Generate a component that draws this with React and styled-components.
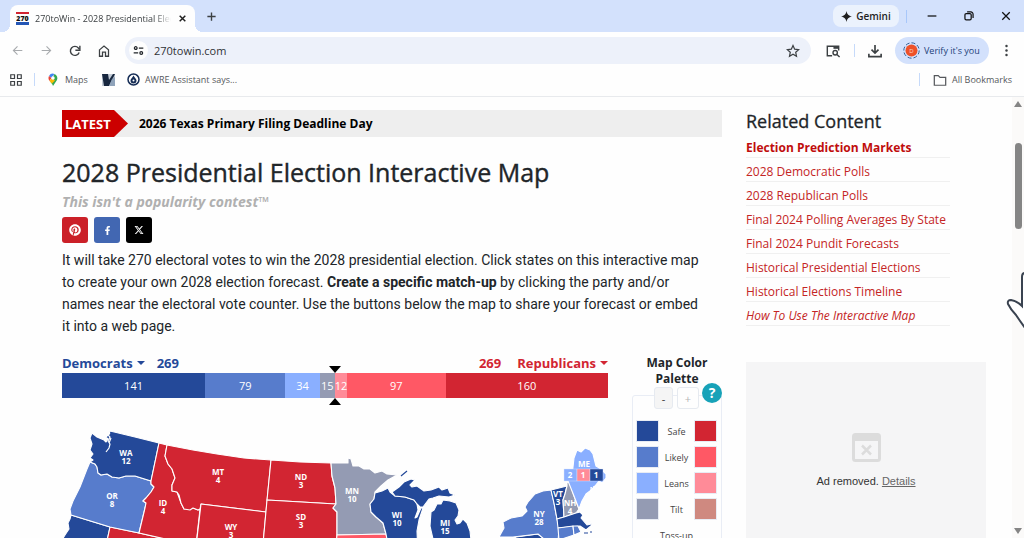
import React, { useState } from 'react';
import styled, { createGlobalStyle } from 'styled-components';
import { FaFacebookF, FaPinterest } from 'react-icons/fa';
import { FaXTwitter } from 'react-icons/fa6';

const colors = {
  demSafe: '#244999',
  demLikely: '#577ccc',
  demLeans: '#8aafff',
  demTilt: '#949bb3',
  repSafe: '#d22532',
  repLikely: '#ff5865',
  repLeans: '#ff8b98',
  repTilt: '#cf8980',
};

const GlobalStyle = createGlobalStyle`
  * {
    box-sizing: border-box;
  }

  body {
    margin: 0;
    font-family: 'Open Sans', 'Noto Sans', sans-serif;
    color: #212529;
    background: #fefefe;
  }

  button, input {
    font-family: inherit;
  }
`;

const Browser = styled.div`
  display: flex;
  flex-direction: column;
  height: 100vh;
  overflow: hidden;
`;

const TabStrip = styled.header`
  display: flex;
  align-items: flex-end;
  height: 32px;
  flex: none;
  padding-left: 10px;
  background: #d3e1fc;
`;

const Tab = styled.div`
  position: relative;
  display: flex;
  align-items: center;
  width: 185px;
  height: 27px;
  padding: 0 6px;
  background: #fefefe;
  border-radius: 8px 8px 0 0;

  &::before, &::after {
    content: '';
    position: absolute;
    bottom: 0;
    width: 8px;
    height: 8px;
  }

  &::before {
    left: -8px;
    background: radial-gradient(circle at 0 0, transparent 8px, #fefefe 8px);
  }

  &::after {
    right: -8px;
    background: radial-gradient(circle at 100% 0, transparent 8px, #fefefe 8px);
  }
`;

const TabTitle = styled.span`
  flex: 1;
  margin-left: 6px;
  margin-right: 4px;
  font-size: 9px;
  line-height: 14px;
  white-space: nowrap;
  overflow: hidden;
  color: #3c4043;
  mask-image: linear-gradient(to right, #000 88%, transparent);
`;

const IconButton = styled.button`
  display: flex;
  align-items: center;
  justify-content: center;
  flex: none;
  width: ${(props) => props.$width || 24}px;
  height: 24px;
  padding: 0;
  border: none;
  background: none;
  color: ${(props) => props.$color || '#3c4043'};
`;

const NewTab = styled.div`
  flex: 1;
  display: flex;
  align-self: center;
  padding-left: 4px;
`;

const WindowControls = styled.div`
  display: flex;
  align-items: center;
  align-self: stretch;
`;

const GeminiButton = styled.button`
  display: flex;
  align-items: center;
  justify-content: center;
  gap: 4px;
  width: 66px;
  height: 22px;
  padding: 0;
  border: none;
  border-radius: 8px;
  background: #ebf2fd;
  color: #1f1f1f;
  font-size: 10px;
  font-weight: 600;
`;

const Separator = styled.span`
  flex: none;
  width: 1px;
  height: 13px;
  margin: 0 ${(props) => props.$gap || 0}px;
  background: ${(props) => props.$color || '#c6dafa'};
`;

const Toolbar = styled.nav`
  display: flex;
  align-items: center;
  flex: none;
  height: 37px;
  padding-left: 3px;
`;

const NavButtons = styled.div`
  display: flex;
  gap: 1px;
  margin-right: 7px;
`;

const AddressBar = styled.label`
  display: flex;
  align-items: center;
  flex: 1;
  height: 27px;
  padding: 0 6px 0 4px;
  border-radius: 14px;
  background: #edf1fa;
`;

const SiteInfo = styled.span`
  display: flex;
  align-items: center;
  justify-content: center;
  width: 19px;
  height: 19px;
  border-radius: 50%;
  background: #fefefe;
`;

const AddressInput = styled.input`
  flex: 1;
  min-width: 0;
  margin-left: 6px;
  padding: 0;
  border: none;
  outline: none;
  background: none;
  font-size: 11px;
  color: #303236;
`;

const ProfileButton = styled.button`
  display: flex;
  align-items: center;
  flex: none;
  gap: 4px;
  width: 94px;
  height: 27px;
  padding: 0 0 0 8px;
  border: none;
  border-radius: 14px;
  background: #d3e1fc;
  color: #1c4079;
  font-size: 9px;
  white-space: nowrap;
`;

const Bookmarks = styled.nav`
  display: flex;
  align-items: center;
  flex: none;
  height: 28px;
  padding: 0 12px 6px 9px;
  border-bottom: 1px solid #e8eaed;
`;

const Bookmark = styled.a`
  display: flex;
  align-items: center;
  gap: 5px;
  margin-right: ${(props) => props.$gap || 0}px;
  color: #55585c;
  font-size: 9px;
  text-decoration: none;
  white-space: nowrap;
`;

const Spacer = styled.span`
  flex: 1;
`;

const Viewport = styled.div`
  position: relative;
  display: flex;
  flex: 1;
  min-height: 0;
  overflow: hidden;
`;

const Page = styled.div`
  flex: 1;
  display: grid;
  grid-template-columns: minmax(0, 1fr) 240px;
  align-items: start;
  gap: 24px;
  padding: 13px 26px 0 62px;
`;

const Ticker = styled.div`
  display: flex;
  align-items: center;
  height: 27px;
  background: #eeeeee;
`;

const TickerLabel = styled.span`
  display: flex;
  align-items: center;
  width: 66px;
  height: 27px;
  padding-left: 3px;
  background: #cc0000;
  color: #fff;
  font-size: 13px;
  font-weight: 700;
  clip-path: polygon(0 0, 52px 0, 100% 50%, 52px 100%, 0 100%);
`;

const TickerLink = styled.a`
  margin-left: 11px;
  color: #000;
  font-size: 12px;
  font-weight: 700;
  text-decoration: none;
`;

const Title = styled.h1`
  margin: 19px 0 0;
  font-size: 25px;
  line-height: 32px;
  font-weight: 500;
  -webkit-text-stroke: 0.4px currentColor;
  white-space: nowrap;
`;

const Tagline = styled.p`
  margin: 4px 0 5px;
  color: #b0b0b0;
  font-size: 14px;
  line-height: 20px;
  font-weight: 700;
  font-style: italic;
`;

const ShareRow = styled.div`
  display: flex;
  gap: 6px;
`;

const ShareButton = styled.button`
  display: flex;
  align-items: center;
  justify-content: center;
  width: 26px;
  height: 26px;
  padding: 0;
  border: none;
  border-radius: 3px;
  background: ${(props) => props.$background};
  color: #fff;
  font-size: 12px;
`;

const Intro = styled.p`
  margin: 6px 0 18px;
  font-family: Roboto, 'Open Sans', sans-serif;
  font-size: 14px;
  line-height: 22px;
  white-space: nowrap;
`;

const Forecast = styled.section`
  display: grid;
  grid-template-columns: minmax(0, 1fr) 90px;
  gap: 24px;
`;

const CounterHeader = styled.div`
  display: flex;
  align-items: center;
  justify-content: space-between;
  height: 18px;
  padding-bottom: 2px;
`;

const PartyTotal = styled.div`
  display: flex;
  align-items: center;
  flex-direction: ${(props) => (props.$reverse ? 'row-reverse' : 'row')};
  gap: ${(props) => (props.$reverse ? 16 : 12)}px;
  color: ${(props) => props.$color};
  font-size: 13px;
  font-weight: 700;
`;

const PartyButton = styled.button`
  display: flex;
  align-items: center;
  gap: 4px;
  padding: 0;
  border: none;
  background: none;
  color: inherit;
  font-size: 13px;
  font-weight: 700;

  &::after {
    content: '';
    border: 4px solid transparent;
    border-top-color: currentColor;
    border-bottom: 0;
  }
`;

const CounterBar = styled.div`
  position: relative;
  display: flex;
  height: 25px;

  &::before, &::after {
    content: '';
    position: absolute;
    left: calc(50% - 6px);
    border: 6px solid transparent;
  }

  &::before {
    bottom: 100%;
    border-top: 7px solid #000;
    border-bottom: 0;
  }

  &::after {
    top: 100%;
    border-bottom: 7px solid #000;
    border-top: 0;
  }
`;

const Segment = styled.div`
  display: flex;
  align-items: center;
  justify-content: center;
  flex: ${(props) => props.$votes} 0 0;
  min-width: 0;
  background: ${(props) => props.$color};
  color: #fff;
  font-size: 11px;
`;

const MapSvg = styled.svg`
  display: block;
  width: 100%;
  margin-top: 9px;
  overflow: visible;
`;

const StatePath = styled.path`
  stroke: #fff;
  stroke-width: 1.1;
  stroke-linejoin: round;
  cursor: pointer;
`;

const StateLabel = styled.text`
  fill: #fff;
  font-size: 8px;
  font-weight: 700;
  text-anchor: middle;
`;

const Palette = styled.aside`
  position: relative;
`;

const PaletteTitle = styled.h2`
  margin: 0;
  font-size: 12px;
  line-height: 16px;
  font-weight: 700;
  text-align: center;
`;

const PaletteBox = styled.div`
  margin-top: 8px;
  padding: 0 4px 12px 3px;
  border: 1px solid #e9edf5;
  border-radius: 3px;
`;

const PaletteButtons = styled.div`
  display: flex;
  justify-content: center;
  gap: 4px;
  margin-top: -9px;
  margin-bottom: 11px;
`;

const StepButton = styled.button`
  width: ${(props) => props.$width}px;
  height: 22px;
  padding: 0;
  border: 1px solid #e6eaf0;
  border-radius: 3px;
  background: ${(props) => props.$background};
  color: ${(props) => props.$color};
  font-size: 11px;
`;

const HelpButton = styled.button`
  position: absolute;
  top: 28px;
  right: 0;
  width: 20px;
  height: 20px;
  padding: 0;
  border: none;
  border-radius: 50%;
  background: #17a2b8;
  color: #fff;
  font-size: 14px;
  line-height: 20px;
  font-weight: 700;
`;

const PaletteRow = styled.div`
  display: grid;
  grid-template-columns: 23px 1fr 23px;
  align-items: center;
  height: 22px;
  margin-bottom: 4px;
  color: #444;
  font-size: 9px;
  text-align: center;
`;

const Swatch = styled.button`
  height: 22px;
  padding: 0;
  border: 1px solid #e8ecf4;
  background: ${(props) => props.$color};
`;

const TossUp = styled.div`
  padding-top: 5px;
  color: #444;
  font-size: 9px;
  line-height: 14px;
  text-align: center;
`;

const SidebarTitle = styled.h2`
  margin: 0 0 2px;
  font-size: 18px;
  line-height: 22px;
  font-weight: 500;
  -webkit-text-stroke: 0.3px currentColor;
`;

const LinkList = styled.ul`
  display: grid;
  grid-template-rows: repeat(8, 1fr);
  width: 204px;
  height: 189px;
  margin: 0;
  padding: 0;
  list-style: none;
`;

const LinkItem = styled.li`
  padding-top: 5px;
  border-bottom: 1px solid #f0f0f0;
  font-size: 12px;
  line-height: 18px;
  white-space: nowrap;
`;

const RelatedLink = styled.a`
  color: ${(props) => (props.$bold ? '#c00d0d' : '#c42525')};
  font-weight: ${(props) => (props.$bold ? 700 : 400)};
  font-style: ${(props) => (props.$italic ? 'italic' : 'normal')};
  text-decoration: none;
`;

const AdBox = styled.div`
  display: flex;
  flex-direction: column;
  align-items: center;
  height: 250px;
  margin-top: 39px;
  padding-top: 71px;
  background: #f5f5f6;
  font-family: 'Liberation Sans', Arial, sans-serif;
  font-size: 11px;
`;

const AdText = styled.p`
  margin: 11px 0 0;
  line-height: 16px;
  color: #333;
`;

const AdLink = styled.a`
  color: #666;
`;

const Scrollbar = styled.div`
  display: flex;
  flex-direction: column;
  align-items: center;
  flex: none;
  width: 12px;
  padding: 4px 0;
  background: #fbfaf9;
`;

const ScrollArrow = styled.span`
  border: 4px solid transparent;
  ${(props) => (props.$up
    ? 'border-bottom: 6px solid #858585; border-top: 0;'
    : 'border-top: 6px solid #858585; border-bottom: 0;')}
`;

const ScrollTrack = styled.div`
  display: flex;
  flex: 1;
  padding-top: 36px;
`;

const ScrollThumb = styled.div`
  width: 7px;
  height: 86px;
  border-radius: 4px;
  background: #858585;
`;

const Cursor = styled.svg`
  position: absolute;
  top: 173px;
  right: 0;
  pointer-events: none;
`;

const segments = [
  { votes: 141, color: colors.demSafe },
  { votes: 79, color: colors.demLikely },
  { votes: 34, color: colors.demLeans },
  { votes: 15, color: colors.demTilt },
  { votes: 12, color: colors.repLeans },
  { votes: 97, color: colors.repLikely },
  { votes: 160, color: colors.repSafe },
];

const ratings = [
  { name: 'Safe', dem: colors.demSafe, rep: colors.repSafe },
  { name: 'Likely', dem: colors.demLikely, rep: colors.repLikely },
  { name: 'Leans', dem: colors.demLeans, rep: colors.repLeans },
  { name: 'Tilt', dem: colors.demTilt, rep: colors.repTilt },
];

const relatedLinks = [
  { text: 'Election Prediction Markets', bold: true },
  { text: '2028 Democratic Polls' },
  { text: '2028 Republican Polls' },
  { text: 'Final 2024 Polling Averages By State' },
  { text: 'Final 2024 Pundit Forecasts' },
  { text: 'Historical Presidential Elections' },
  { text: 'Historical Elections Timeline' },
  { text: 'How To Use The Interactive Map', italic: true },
];

const states = [
  { id: 'CA', color: colors.demSafe, d: 'M71 516 L110 528 L104 556 L62 556 L62 541 L65 536 L69 530 L68 524 L70 520Z' },
  { id: 'NV', color: colors.repSafe, d: 'M110 528 L139 534 L170 541 L168 556 L104 556Z' },
  { id: 'OR', votes: 8, x: 112, y: 500, color: colors.demLikely, d: 'M90 463 L95 465 L97 468 L98 474 L101 476 L107 475 L112 478 L119 479 L126 477 L135 477 L151 482 L151 485 L154 488 L151 493 L146 499 L143 502 L146 504 L145 509 L139 534 L110 528 L71 516 L70 510 L73 502 L80 488 L87 470Z' },
  { id: 'WA', votes: 12, x: 126, y: 457, color: colors.demSafe, d: 'M92 434 L97 438 L104 441 L106 443 L108 440 L106 438 L109 435 L110 432 L135 438 L159 444 L151 482 L135 477 L126 477 L119 479 L112 478 L107 475 L101 476 L98 474 L97 468 L95 465 L90 463 L93 461 L90 459 L93 455 L90 451 L92 445 L90 439Z' },
  { id: 'ID', votes: 4, x: 163, y: 507, color: colors.repSafe, d: 'M159 444 L167 446 L165 457 L168 465 L172 470 L175 479 L172 486 L172 492 L177 493 L181 504 L184 510 L193 509 L198 511 L200 510 L195 556 L168 556 L170 541 L139 534 L145 509 L146 504 L143 502 L146 499 L151 493 L154 488 L151 485 L151 482Z' },
  { id: 'MT', votes: 4, x: 218, y: 476, color: colors.repSafe, d: 'M167 446 L193 451 L217 455 L244 459 L271 461 L266 513 L201 505 L200 510 L198 511 L193 509 L190 511 L184 510 L181 504 L179 496 L177 493 L172 492 L172 486 L175 479 L172 470 L168 465 L165 457Z' },
  { id: 'WY', votes: 3, x: 231, y: 531, color: colors.repSafe, d: 'M201 505 L266 513 L262 556 L195 556Z' },
  { id: 'ND', votes: 3, x: 301, y: 481, color: colors.repSafe, d: 'M271 461 L300 463 L331 464 L332 477 L335 489 L336 505 L267 501Z' },
  { id: 'SD', votes: 3, x: 301, y: 521, color: colors.repSafe, d: 'M267 501 L336 505 L333 509 L337 513 L337 536 L335 556 L262 556Z' },
  { id: 'MN', votes: 10, x: 352, y: 495, color: colors.demTilt, d: 'M331 464 L348 464 L348 459 L351 460 L353 467 L359 467 L364 470 L370 470 L375 474 L382 472 L387 475 L397 476 L388 481 L381 487 L375 493 L374 500 L370 505 L371 513 L376 518 L383 524 L386 535 L337 536 L337 513 L333 509 L336 505 L335 489 L332 477Z' },
  { id: 'IA', color: colors.repLikely, d: 'M337 536 L386 535 L390 556 L335 556Z' },
  { id: 'WI', votes: 10, x: 397, y: 519, color: colors.demSafe, d: 'M375 494 L382 492 L388 489 L390 493 L395 497 L405 498 L414 501 L417 505 L418 511 L415 519 L417 518 L421 509 L423 509 L419 521 L417 532 L418 556 L390 556 L386 535 L383 524 L376 518 L371 513 L370 505 L374 500Z' },
  { id: 'MIU', color: colors.demSafe, d: 'M392 493 L399 488 L404 483 L411 480 L415 481 L410 486 L412 488 L417 487 L424 492 L431 491 L439 488 L442 491 L448 489 L450 494 L455 496 L449 498 L439 497 L433 499 L429 500 L423 508 L420 508 L417 505 L414 501 L405 498 L395 497Z' },
  { id: 'MI', votes: 15, x: 445, y: 527, color: colors.demSafe, d: 'M443 501 L450 502 L456 504 L459 511 L458 517 L455 521 L457 525 L460 524 L463 520 L467 524 L470 532 L471 541 L465 556 L434 556 L433 540 L430 527 L431 513 L434 511 L437 505 L441 505Z' },
  { id: 'PA', color: colors.demSafe, d: 'M504 556 L516 538 L538 535 L543 539 L543 556Z' },
  { id: 'NY', votes: 28, x: 539, y: 518, color: colors.demLikely, d: 'M551 491 L543 492 L535 495 L528 503 L525 508 L527 512 L522 517 L511 519 L503 523 L504 529 L499 538 L513 538 L538 535 L544 540 L558 544 L559 528 L557 520 L554 504Z' },
  { id: 'VT', votes: 3, x: 558, y: 498, color: colors.demSafe, d: 'M551 491 L567 487 L565 495 L563 501 L564 518 L557 520 L554 504Z' },
  { id: 'NH', votes: 4, x: 570, y: 507, color: colors.demTilt, d: 'M567 487 L567 483 L570 484 L574 497 L579 510 L576 514 L564 518 L563 501 L565 495Z' },
  { id: 'ME', color: colors.demLeans, x: 584, y: 468, d: 'M568 482 L572 477 L573 468 L574 459 L577 451 L581 453 L585 449 L590 451 L593 455 L596 467 L601 470 L606 475 L606 479 L602 484 L599 482 L595 487 L590 492 L586 495 L582 502 L579 510 L574 497Z' },
  { id: 'MA', color: colors.demSafe, d: 'M557 520 L564 518 L576 514 L580 513 L583 516 L581 519 L587 526 L591 525 L589 521 L592 526 L586 531 L580 527 L558 529Z' },
  { id: 'CT', color: colors.demLikely, d: 'M558 529 L573 527 L574 536 L559 541Z' },
  { id: 'RI', color: colors.demLikely, d: 'M573 527 L578 527 L581 533 L574 536Z' },
];

const districts = [
  { votes: 2, x: 564, color: colors.demLeans },
  { votes: 1, x: 577, color: colors.repLeans },
  { votes: 1, x: 590, color: colors.demSafe },
];

const ElectionMap = () => (
  <MapSvg viewBox="62 408 546 152" role="img" aria-label="Electoral map of the United States">
    {states.map((state) => (
      <StatePath key={state.id} d={state.d} fill={state.color} />
    ))}
    {/* Puget Sound */}
    <path d="M110 434l-2 2 2 2-2 4 2 3-1 4-3 4m3-9 2-5" stroke="#fff" strokeWidth="1.2" fill="none" />
    {/* Isle Royale, Cape Cod islands */}
    <path d="M401 477l6-5M584 534h4M590 533h2" stroke={colors.demSafe} strokeWidth="1.2" />
    {/* Maine coast */}
    <path d="M591 493v-5l2 3 1-4 2 5 1-5 2 3M601 487l1 2" stroke="#fff" strokeWidth="1" fill="none" />
    {/* Lake Michigan bays */}
    <path d="M433 503l4-1-3 5M441 500l7-1" stroke="#fff" strokeWidth="1.2" fill="none" />
    {districts.map((district) => (
      <g key={district.x}>
        <rect x={district.x} y="470" width="13" height="12" fill={district.color} stroke="#dbe6ff" strokeWidth="0.4" />
        <StateLabel x={district.x + 6} y="479">{district.votes}</StateLabel>
      </g>
    ))}
    {states.filter((state) => state.x).map((state) => (
      <g key={state.id}>
        <StateLabel x={state.x} y={state.y}>{state.id}</StateLabel>
        {state.votes && <StateLabel x={state.x} y={state.y + 8}>{state.votes}</StateLabel>}
      </g>
    ))}
  </MapSvg>
);

const Icon = ({ size = 14, children, ...rest }) => (
  <svg width={size} height={size} viewBox="0 0 16 16" fill="none" stroke="currentColor" strokeWidth="1.6" aria-hidden="true" {...rest}>
    {children}
  </svg>
);

const App = () => {
  const [address, setAddress] = useState('270towin.com');

  return (
    <Browser>
      <GlobalStyle />
      <TabStrip>
        <Tab>
          <svg width="13" height="13" viewBox="0 0 13 13" aria-hidden="true">
            <path d="M0 0h13v2H0z" fill="#d22532" />
            <path d="M0 10h13v3H0z" fill="#2456b5" />
            <text x="6.5" y="9" textAnchor="middle" fontSize="7" fontWeight="800" fill="#111">270</text>
          </svg>
          <TabTitle>270toWin - 2028 Presidential Election</TabTitle>
          <IconButton $width={14} aria-label="Close tab" $color="#1f1f1f">
            <Icon size={9}><path d="M3 3l10 10M13 3L3 13" strokeWidth="2.6" /></Icon>
          </IconButton>
        </Tab>
        <NewTab>
          <IconButton aria-label="New tab">
            <Icon size={11}><path d="M8 2v12M2 8h12" strokeWidth="2" /></Icon>
          </IconButton>
        </NewTab>
        <WindowControls>
          <GeminiButton>
            <Icon size={11}><path d="M8 0c1 5 3 7 8 8-5 1-7 3-8 8-1-5-3-7-8-8 5-1 7-3 8-8z" fill="currentColor" stroke="none" /></Icon>
            Gemini
          </GeminiButton>
          <Separator $gap={7} $color="#a8c7fa" />
          <IconButton $width={36} aria-label="Minimize" $color="#111">
            <Icon size={10}><path d="M1 8h14" strokeWidth="2" /></Icon>
          </IconButton>
          <IconButton $width={37} aria-label="Restore" $color="#111">
            <Icon size={10}>
              <rect x="1.5" y="4" width="10" height="10" rx="2" strokeWidth="2" />
              <path d="M5 1.5h6a3.5 3.5 0 0 1 3.5 3.5v6" strokeWidth="2" />
            </Icon>
          </IconButton>
          <IconButton $width={37} aria-label="Close window" $color="#111">
            <Icon size={10}><path d="M2 2l12 12M14 2L2 14" strokeWidth="2" /></Icon>
          </IconButton>
        </WindowControls>
      </TabStrip>

      <Toolbar>
        <NavButtons>
          <IconButton $width={28} aria-label="Back" $color="#a8abae">
            <Icon size={11}><path d="M15 8H2M8 2L2 8l6 6" /></Icon>
          </IconButton>
          <IconButton $width={28} aria-label="Forward" $color="#a8abae">
            <Icon size={11}><path d="M1 8h13M8 2l6 6-6 6" /></Icon>
          </IconButton>
          <IconButton $width={28} aria-label="Reload">
            <Icon size={12}>
              <path d="M13.5 10A6 6 0 1 1 12.5 4L14 5.5" strokeWidth="1.9" />
              <path d="M14.5 1v6h-6" strokeWidth="1.9" />
            </Icon>
          </IconButton>
          <IconButton $width={28} aria-label="Home">
            <Icon size={12}><path d="M2 6.5L8 1.5l6 5V15h-4V9.5H6V15H2z" strokeWidth="1.7" /></Icon>
          </IconButton>
        </NavButtons>
        <AddressBar>
          <SiteInfo>
            <Icon size={11} strokeWidth="1.8">
              <circle cx="4" cy="4.5" r="2" />
              <path d="M8.5 4.5H15M1 11.5h6.5" />
              <circle cx="12" cy="11.5" r="2" />
            </Icon>
          </SiteInfo>
          <AddressInput aria-label="Address" value={address} onChange={(e) => setAddress(e.target.value)} />
          <IconButton aria-label="Bookmark this page">
            <Icon size={14}><path d="M8 1.7l1.9 4.2 4.6.5-3.4 3.1.9 4.5-4-2.3-4 2.3.9-4.5L1.5 6.4l4.6-.5z" strokeWidth="1.4" /></Icon>
          </IconButton>
        </AddressBar>
        <IconButton $width={43} aria-label="Search this page">
          <Icon size={14}>
            <path d="M7 13.5H1.5V2.5h13v5" />
            <path d="M8.5 3h6v2.5h-6z" fill="currentColor" stroke="none" />
            <circle cx="10.5" cy="10" r="2.5" />
            <path d="M12.5 12l3 3" />
          </Icon>
        </IconButton>
        <Separator />
        <IconButton $width={40} aria-label="Downloads">
          <Icon size={14}><path d="M8 1v9M4 6.5l4 4 4-4M1 11v3.5h14V11" strokeWidth="1.9" /></Icon>
        </IconButton>
        <ProfileButton>
          <svg width="17" height="17" viewBox="0 0 17 17" aria-hidden="true">
            <circle cx="8.5" cy="8.5" r="7.7" fill="none" stroke="#356096" strokeDasharray="4 2" />
            <circle cx="8.5" cy="8.5" r="6" fill="#ee5128" />
            <text x="8.5" y="10.5" textAnchor="middle" fontSize="6" fill="#ffd6c8">D</text>
          </svg>
          Verify it&apos;s you
        </ProfileButton>
        <IconButton $width={35} aria-label="Menu">
          <Icon size={13}>
            <g fill="currentColor" stroke="none">
              <circle cx="8" cy="2.5" r="1.5" /><circle cx="8" cy="8" r="1.5" /><circle cx="8" cy="13.5" r="1.5" />
            </g>
          </Icon>
        </IconButton>
      </Toolbar>

      <Bookmarks>
        <IconButton $width={14} aria-label="Apps">
          <Icon size={12}><path d="M1 1h5v5H1zM10 1h5v5h-5zM1 10h5v5H1zM10 10h5v5h-5z" /></Icon>
        </IconButton>
        <Separator $gap={11} />
        <Bookmark href="#maps" $gap={14}>
          <svg width="14" height="14" viewBox="0 0 14 14" aria-hidden="true">
            <path d="M3 3a4.5 4.5 0 0 1 5.5-2L5.5 5z" fill="#4285f4" />
            <path d="M3 3l2.5 2L3.5 8C2.3 6.5 2.2 4.5 3 3z" fill="#ea4335" />
            <path d="M8.5 1A4.5 4.5 0 0 1 11 7L7 13c-.5-1.8-1.5-2.8-2.5-4z" fill="#34a853" />
            <path d="M3.5 8L6 5l3 2.5L6 10.5z" fill="#fbbc04" />
            <circle cx="7" cy="5" r="1.7" fill="#fff" />
          </svg>
          Maps
        </Bookmark>
        <Bookmark href="#v" aria-label="Voting site" $gap={12}>
          <svg width="13" height="12" viewBox="0 0 13 12" aria-hidden="true">
            <path d="M0 0h13v12H0z" fill="#c3ccd7" />
            <path d="M0 0h6l1 6 4-6h2L7 12H2z" fill="#18273f" />
            <path d="M10 5l3-2v9H7z" fill="#8fa3ba" />
          </svg>
        </Bookmark>
        <Bookmark href="#awre">
          <svg width="13" height="13" viewBox="0 0 13 13" aria-hidden="true">
            <circle cx="6.5" cy="6.5" r="5.5" fill="#fff" stroke="#152c55" strokeWidth="1.5" />
            <path d="M6.5 2.5C8 5 9.5 6 9.5 7.5a3 3 0 0 1-6 0C3.5 6 5 5 6.5 2.5z" fill="#152c55" />
            <circle cx="6.5" cy="7.5" r="1" fill="#fff" />
          </svg>
          AWRE Assistant says...
        </Bookmark>
        <Spacer />
        <Separator $gap={13} />
        <Bookmark href="#all">
          <Icon size={14}><path d="M1.5 3h4.5l2 2h6.5v9h-13z" strokeWidth="1.4" /></Icon>
          All Bookmarks
        </Bookmark>
      </Bookmarks>

      <Viewport>
        <Page>
          <main>
            <Ticker>
              <TickerLabel>LATEST</TickerLabel>
              <TickerLink href="#latest">2026 Texas Primary Filing Deadline Day</TickerLink>
            </Ticker>
            <Title>2028 Presidential Election Interactive Map</Title>
            <Tagline>This isn&apos;t a popularity contest™</Tagline>
            <ShareRow>
              <ShareButton $background="#cb2028" aria-label="Pinterest"><FaPinterest /></ShareButton>
              <ShareButton $background="#4267b2" aria-label="Facebook"><FaFacebookF size={9} /></ShareButton>
              <ShareButton $background="#000" aria-label="X"><FaXTwitter size={10} /></ShareButton>
            </ShareRow>
            <Intro>
              It will take 270 electoral votes to win the 2028 presidential election. Click states on this interactive map
              <br />
              to create your own 2028 election forecast. <strong>Create a specific match-up</strong> by clicking the party and/or
              <br />
              names near the electoral vote counter. Use the buttons below the map to share your forecast or embed
              <br />
              it into a web page.
            </Intro>

            <Forecast>
              <div>
                <CounterHeader>
                  <PartyTotal $color={colors.demSafe}>
                    <PartyButton>Democrats</PartyButton>
                    <span>269</span>
                  </PartyTotal>
                  <PartyTotal $color={colors.repSafe} $reverse>
                    <PartyButton>Republicans</PartyButton>
                    <span>269</span>
                  </PartyTotal>
                </CounterHeader>
                <CounterBar>
                  {segments.map((segment) => (
                    <Segment key={segment.votes} $votes={segment.votes} $color={segment.color}>
                      {segment.votes}
                    </Segment>
                  ))}
                </CounterBar>
                <ElectionMap />
              </div>

              <Palette>
                <PaletteTitle>Map Color Palette</PaletteTitle>
                <PaletteBox>
                  <PaletteButtons>
                    <StepButton $width={19} $background="#f5f5f5" $color="#333" aria-label="Fewer colors">-</StepButton>
                    <StepButton $width={22} $background="#fefefe" $color="#b5b5b5" aria-label="More colors">+</StepButton>
                  </PaletteButtons>
                  {ratings.map((rating) => (
                    <PaletteRow key={rating.name}>
                      <Swatch $color={rating.dem} aria-label={`${rating.name} Democratic`} />
                      <span>{rating.name}</span>
                      <Swatch $color={rating.rep} aria-label={`${rating.name} Republican`} />
                    </PaletteRow>
                  ))}
                  <TossUp>Toss-up</TossUp>
                </PaletteBox>
                <HelpButton aria-label="Help">?</HelpButton>
              </Palette>
            </Forecast>
          </main>

          <aside>
            <SidebarTitle>Related Content</SidebarTitle>
            <LinkList>
              {relatedLinks.map((link) => (
                <LinkItem key={link.text}>
                  <RelatedLink href="#related" $bold={link.bold} $italic={link.italic}>{link.text}</RelatedLink>
                </LinkItem>
              ))}
            </LinkList>
            <AdBox>
              <svg width="29" height="29" viewBox="0 0 29 29" aria-hidden="true">
                <rect x="1.5" y="1.5" width="26" height="26" rx="2" fill="none" stroke="#dcdcdc" strokeWidth="3" />
                <path d="M1 1h27v7H1z" fill="#dcdcdc" />
                <path d="M10 12.5l9 9M19 12.5l-9 9" stroke="#dcdcdc" strokeWidth="2.5" />
              </svg>
              <AdText>Ad removed. <AdLink href="#details">Details</AdLink></AdText>
            </AdBox>
          </aside>
        </Page>

        <Scrollbar>
          <ScrollArrow $up />
          <ScrollTrack><ScrollThumb /></ScrollTrack>
          <ScrollArrow />
        </Scrollbar>

        <Cursor width="18" height="60" viewBox="0 0 18 60" aria-hidden="true">
          <path d="M19 3q-3 0-3 4v29q-5-5-11-6-4 0-3 4 3 6 8 11 4 6 9 13z" fill="#fff" stroke="#3a4350" strokeWidth="2" />
        </Cursor>
      </Viewport>
    </Browser>
  );
};

export default App;
